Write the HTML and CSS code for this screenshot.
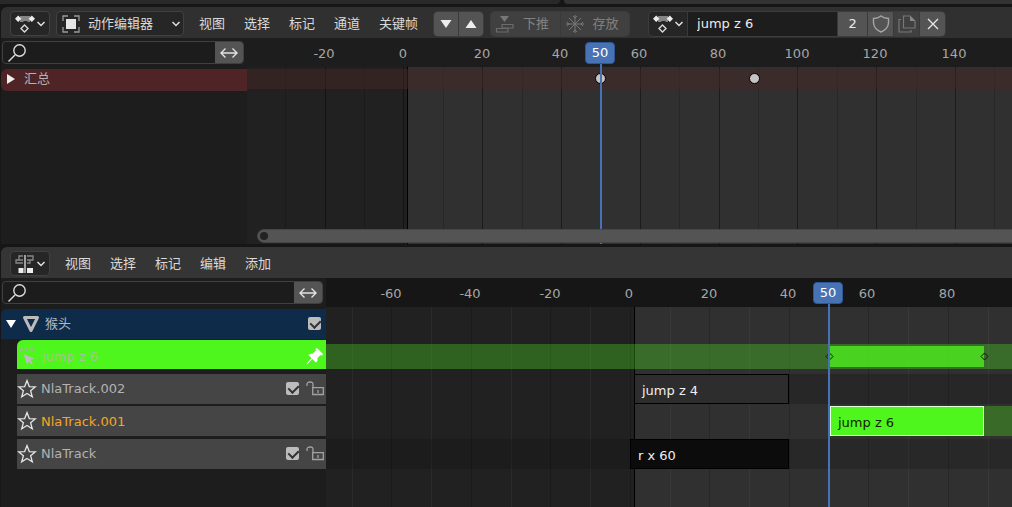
FILE: index.html
```html
<!DOCTYPE html>
<html lang="zh-CN">
<head>
<meta charset="utf-8">
<title>动作编辑器</title>
<link rel="stylesheet" href="styles.css">
</head>
<body>
<svg class="defs" aria-hidden="true">
  <symbol id="chevron" viewBox="0 0 10 8"><path d="M1.5 2 5 5.5 8.5 2" fill="none" stroke="#e0e0e0" stroke-width="1.5"/></symbol>
  <symbol id="action" viewBox="0 0 20 20">
    <path d="M5 2h10v6h-2l-1-1H9L8 8H5z" fill="#858585"/>
    <path d="M3.200 1.600 6.400 4.800 3.200 8 0 4.800zM16.800 1.600 20 4.800 16.800 8 13.600 4.800z" fill="#ececec"/>
    <path d="M9.500 11 13 14.500 9.500 18 6 14.500z" fill="none" stroke="#d8d8d8" stroke-width="1.400"/>
  </symbol>
  <symbol id="search" viewBox="0 0 20 20"><path d="M8 12 1.500 18.500" stroke="#ddd" stroke-width="1.500"/><circle cx="12.500" cy="7.500" r="5.700" fill="none" stroke="#ddd" stroke-width="1.400"/></symbol>
  <symbol id="expand" viewBox="0 0 18 12"><path d="M1 6H17M5.500 1.500 1 6l4.500 4.500M12.500 1.500 17 6l-4.500 4.500" fill="none" stroke="#e2e2e2" stroke-width="1.400"/></symbol>
  <symbol id="star" viewBox="0 0 20 20"><path d="M10 1.600 12.300 7.600 18.400 7.800 13.600 11.700 15.300 17.900 10 14.500 4.700 17.900 6.400 11.700 1.600 7.800 7.700 7.600z" fill="none" stroke="#e4e4e4" stroke-width="1.300"/></symbol>
  <symbol id="unlock" viewBox="0 0 18 16"><path d="M1 5V3.500Q1 1 4 1T7 3.500V7M6.700 6.700H17.300V13.500H6.700zM12 9v3" fill="none" stroke="#a2a2a2" stroke-width="1.300"/></symbol>
</svg>

<div class="edge"><div class="edge-a"></div><div class="edge-b"></div></div>

<section class="editor editor-action">
  <header class="header">
    <button class="box type" aria-label="编辑器类型"><svg width="20" height="20"><use href="#action"/></svg><svg width="10" height="8"><use href="#chevron"/></svg></button>
    <div class="mode">
      <svg class="mode-icon" width="18" height="18" viewBox="0 0 18 18"><path d="M1 6V1H6M12 1H17V6M17 12V17H12M6 17H1V12" fill="none" stroke="#999" stroke-width="1.300"/><path d="M4 4H14V14H4z" fill="#e6e6e6"/></svg>
      <select class="box" aria-label="模式"><option>动作编辑器</option></select>
      <svg class="mode-arrow" width="10" height="8"><use href="#chevron"/></svg>
    </div>
    <nav class="menus">
      <button>视图</button><button>选择</button><button>标记</button><button>通道</button><button>关键帧</button>
    </nav>
    <div class="group moves">
      <button aria-label="下移"><svg width="12" height="10"><path d="M.5 1H11.500L6 9z" fill="#eee"/></svg></button>
      <button aria-label="上移"><svg width="12" height="10"><path d="M.5 9H11.500L6 1z" fill="#eee"/></svg></button>
    </div>
    <div class="group stash">
      <button disabled><svg width="20" height="20" viewBox="0 0 20 20"><path d="M5 2H14L9.500 8z" fill="#777"/><path d="M7 10.500H18V14H7zM1.500 14.500H13V18H1.500z" fill="none" stroke="#6b6b6b" stroke-width="1.200"/></svg>下推</button>
      <button disabled><svg width="20" height="20" viewBox="0 0 20 20"><path d="M10 1V19M1 10H19M4 4 16 16M16 4 4 16M8 2 10 4 12 2M8 18 10 16 12 18M2 8 4 10 2 12M18 8 16 10 18 12" fill="none" stroke="#777" stroke-width="1"/></svg>存放</button>
    </div>
    <div class="group action-id">
      <button class="type dark" aria-label="浏览动作"><svg width="20" height="20"><use href="#action"/></svg><svg width="10" height="8"><use href="#chevron"/></svg></button>
      <input type="text" value="jump z 6" aria-label="动作名称">
      <button class="users">2</button>
      <button aria-label="伪用户"><svg width="18" height="18" viewBox="0 0 18 18"><path d="M9 1Q12 3.500 16.500 3.500V8Q16 14 9 17 2 14 1.500 8V3.500Q6 3.500 9 1z" fill="none" stroke="#a5a5a5" stroke-width="1.400"/></svg></button>
      <button disabled aria-label="复制"><svg width="20" height="20" viewBox="0 0 20 20"><path d="M6.500 2H13L18 7V14H6.500zM4 5.500H2V18H14V16" fill="none" stroke="#777" stroke-width="1.200"/><path d="M13 2V7H18z" fill="#888"/></svg></button>
      <button aria-label="取消关联"><svg width="12" height="12"><path d="M1 1 11 11M11 1 1 11" stroke="#e4e4e4" stroke-width="1.400"/></svg></button>
    </div>
  </header>
  <div class="content">
    <aside class="channels">
      <div class="search"><svg width="20" height="20"><use href="#search"/></svg><input type="search" aria-label="搜索"><button aria-label="反转"><svg width="18" height="12"><use href="#expand"/></svg></button></div>
      <div class="summary"><svg width="10" height="10"><path d="M1 0 9 5 1 10z" fill="#f0f0f0"/></svg>汇总</div>
    </aside>
    <div class="timeline">
      <div class="ruler">
        <span style="left:77px">-20</span><span style="left:156px">0</span><span style="left:235px">20</span><span style="left:313px">40</span><span style="left:392px">60</span><span style="left:471px">80</span><span style="left:550px">100</span><span style="left:628px">120</span><span style="left:707px">140</span>
      </div>
      <div class="canvas">
        <svg class="grid" aria-hidden="true">
          <rect class="range" x="160" width="100%" height="100%"/>
          <g class="minor"><rect x="38"/><rect x="117"/><rect x="196"/><rect x="275"/><rect x="432"/><rect x="511"/><rect x="590"/><rect x="669"/><rect x="747"/></g>
          <g class="major"><rect x="78"/><rect x="156"/><rect x="235"/><rect x="314"/><rect x="393"/><rect x="472"/><rect x="550"/><rect x="629"/><rect x="708"/></g>
          <g class="start"><rect x="160"/></g>
        </svg>
        <div class="summary-lane"><i class="key" style="left:353px"></i><i class="key" style="left:507px"></i></div>
      </div>
      <div class="playhead" style="left:353px"><b>50</b></div>
      <div class="scrollbar"></div>
    </div>
  </div>
</section>

<section class="editor editor-nla">
  <header class="header">
    <button class="box type" aria-label="编辑器类型"><svg width="20" height="20" viewBox="0 0 20 20"><path d="M8 2H4V6H1V9H8M12 2H18V6H15V9H12M4 6H8M12 6H15" fill="none" stroke="#888" stroke-width="1.300"/><path d="M3.500 14H8.500V19H3.500zM12 14H18V19H12z" fill="#eee"/><path d="M10 1V19" stroke="#eee" stroke-width="1.200"/></svg><svg width="10" height="8"><use href="#chevron"/></svg></button>
    <nav class="menus"><button>视图</button><button>选择</button><button>标记</button><button>编辑</button><button>添加</button></nav>
  </header>
  <div class="content">
    <aside class="channels channels-wide">
      <div class="search"><svg width="20" height="20"><use href="#search"/></svg><input type="search" aria-label="搜索"><button aria-label="反转"><svg width="18" height="12"><use href="#expand"/></svg></button></div>
      <div class="object">
        <svg width="10" height="8"><path d="M0 0H10L5 8z" fill="#fff"/></svg>
        <svg width="18" height="18" viewBox="0 0 18 18"><path d="M2.500 2.500H15.500L9 15.500z" fill="none" stroke="#bbb" stroke-width="3" stroke-linejoin="round"/></svg>
        <label for="object-on">猴头</label><input type="checkbox" id="object-on" checked>
      </div>
      <div class="active-action">
        <svg width="18" height="20" viewBox="0 0 18 20"><path d="M3 1 5.500 3.500 3 6 .5 3.500zM14 1 16.500 3.500 14 6 11.500 3.500zM6 1H11L9.500 3.500 11 6H6L7.500 3.500z" fill="#8fc47c"/><path d="M5.500 8 16.500 12.500 12.500 14 15 17.500 13.500 18.500 11 15.500 9 18.500z" fill="#bcbcbc"/></svg>
        <span>jump z 6</span>
        <button aria-label="固定"><svg width="18" height="18" viewBox="0 0 18 18"><path d="M11 1 17 7 16 8.500 14.500 8 11.500 11Q12 14 10 15.500L6.500 12 1 17.500.5 17 5.500 11 2.500 8Q4 6 7 6.500L10 3.500 9.500 2z" fill="#fff"/></svg></button>
      </div>
      <div class="track"><svg width="20" height="20"><use href="#star"/></svg><label for="t2">NlaTrack.002</label><input type="checkbox" id="t2" checked><button aria-label="锁定"><svg width="18" height="16"><use href="#unlock"/></svg></button></div>
      <div class="track selected"><svg width="20" height="20"><use href="#star"/></svg><span>NlaTrack.001</span></div>
      <div class="track last"><svg width="20" height="20"><use href="#star"/></svg><label for="t0">NlaTrack</label><input type="checkbox" id="t0" checked><button aria-label="锁定"><svg width="18" height="16"><use href="#unlock"/></svg></button></div>
    </aside>
    <div class="timeline">
      <div class="ruler">
        <span style="left:65px">-60</span><span style="left:144px">-40</span><span style="left:224px">-20</span><span style="left:303px">0</span><span style="left:383px">20</span><span style="left:462px">40</span><span style="left:541px">60</span><span style="left:621px">80</span>
      </div>
      <div class="canvas">
        <svg class="grid" aria-hidden="true">
          <rect class="range" x="308" width="100%" height="100%"/>
          <g class="minor"><rect x="26"/><rect x="105"/><rect x="185"/><rect x="264"/><rect x="344"/><rect x="423"/><rect x="582"/><rect x="662"/></g>
          <g class="major"><rect x="65"/><rect x="145"/><rect x="224"/><rect x="304"/><rect x="383"/><rect x="463"/><rect x="542"/><rect x="622"/></g>
          <g class="start"><rect x="308"/></g>
        </svg>
        <div class="lane lane-action">
          <div class="extent" style="left:504px;width:154px"></div>
          <svg class="mark" style="left:503px" width="9" height="9"><path d="M4.500 1 8 4.500 4.500 8 1 4.500z"/></svg>
          <svg class="mark" style="left:658px" width="9" height="9"><path d="M4.500 1 8 4.500 4.500 8 1 4.500z"/></svg>
        </div>
        <div class="lane"><div class="hold" style="left:463px"></div><div class="strip" style="left:308px;width:155px">jump z 4</div></div>
        <div class="lane lane-selected"><div class="hold" style="left:658px"></div><div class="strip" style="left:504px;width:154px">jump z 6</div></div>
        <div class="lane lane-last"><div class="strip" style="left:304px;width:159px">r x 60</div></div>
      </div>
      <div class="playhead" style="left:502px"><b>50</b></div>
    </div>
  </div>
</section>
</body>
</html>
```

FILE: styles.css
```css
* { box-sizing: border-box; }
body {
  margin: 0;
  min-height: 100vh;
  display: flex;
  flex-direction: column;
  background: #161616;
  color: #dadada;
  font: 13px/18px "DejaVu Sans", "Noto Sans CJK SC", sans-serif;
  overflow: hidden;
}
svg { display: block; flex: none; }
.defs { position: absolute; width: 0; height: 0; }
button, input, select { font: inherit; color: inherit; margin: 0; padding: 0; border: 0; background: none; }

.edge { display: flex; gap: 4px; height: 4px; margin-bottom: 3px; }
.edge-a { flex: 560; background: #292929; border-bottom-right-radius: 4px; }
.edge-b { flex: 448; background: #333; border-bottom-left-radius: 4px; }

.editor { display: flex; flex-direction: column; margin-left: 1px; }
.editor-action { flex: 237 1 0; margin-bottom: 3px; }
.editor-nla { flex: 260 1 0; }
.header {
  display: flex;
  align-items: center;
  flex: none;
  height: 31px;
  padding: 2px 0 0 9px;
  background: #303030;
  border-top-left-radius: 6px;
}
.editor-nla .header { background: #353535; }
.box { height: 25px; border: 1px solid #414141; border-radius: 4px; background: #262626; }
.type { display: flex; align-items: center; justify-content: space-between; width: 40px; padding: 0 3px 0 4px; }
.mode { position: relative; margin-left: 6px; }
.mode select { width: 128px; padding-left: 31px; appearance: none; }
.mode-icon { position: absolute; left: 6px; top: 4px; }
.mode-arrow { position: absolute; right: 3px; top: 9px; }
.menus { display: flex; gap: 19px; margin-left: 15px; white-space: nowrap; text-shadow: 0 1px 1px #0008; }

.group { display: flex; gap: 1px; height: 24px; border-radius: 4px; overflow: hidden; background: #3a3a3a; box-shadow: 0 0 0 1px #3c3c3c; }
.group button { display: flex; align-items: center; justify-content: center; width: 25px; background: #545454; }
.group button:disabled { background: #404040; color: #808080; }
.moves { margin-left: 16px; width: 49px; }
.moves button { flex: 1; }
.stash { margin-left: 8px; width: 138px; }
.group.stash button { flex: 1; gap: 8px; justify-content: flex-start; padding-left: 4px; }
.action-id { margin-left: 20px; color: #ececec; }
.action-id .type { width: 38px; background: #262626; justify-content: space-between; }
.action-id input { width: 149px; padding-left: 9px; background: #1d1d1d; }
.action-id .users { width: 29px; }

.content { display: flex; flex: 1; min-height: 0; }
.channels { flex: none; width: 246px; background: #1d1d1d; }
.channels-wide { width: 325px; }
.search { display: flex; align-items: center; height: 23px; margin: 3px 3px 5px 1px; border: 1px solid #404040; border-radius: 4px; overflow: hidden; background: #1c1c1c; }
.search > svg { margin-left: 4px; }
.search input { flex: 1; min-width: 0; }
.search button { display: flex; align-items: center; justify-content: center; align-self: stretch; width: 28px; background: #545454; }
.summary { display: flex; align-items: center; gap: 8px; height: 22px; padding: 0 0 2px 5px; background: #4e2427; color: #b8b0b0; border-radius: 6px 0 0 6px; }

.object { display: flex; align-items: center; height: 30px; padding: 0 5px; background: #0f2b4a; color: #b0b8c0; border-radius: 6px 0 0 0; }
.object svg + svg { margin: 0 5px 0 6px; }
.object label { flex: 1; }
.channels input[type=checkbox] {
  appearance: none;
  width: 13px;
  height: 13px;
  margin-bottom: 2px;
  border-radius: 2px;
  background: #bcbcbc;
  position: relative;
}
.channels input[type=checkbox]::after {
  content: "";
  position: absolute;
  left: 4px;
  top: 1px;
  width: 5px;
  height: 8px;
  border: solid #333;
  border-width: 0 2px 2px 0;
  transform: rotate(45deg);
}
.active-action { display: flex; align-items: center; gap: 6px; height: 29px; margin: 1px 0 5px 16px; padding: 3px 2px 0 1px; background: #4ff61d; color: #a2c496; border-radius: 6px 0 0 0; }
.active-action span { flex: 1; padding-top: 2px; }
.track { display: flex; align-items: center; height: 30px; margin: 0 0 2px 16px; padding: 0 2px 0 0; background: #454545; color: #b2b2b2; }
.track svg { margin-right: 4px; }
.track label { flex: 1; }
.track span { padding-top: 2px; }
.track button { margin-left: 7px; }
.track button svg { margin: 0; }
.track.selected { color: #f5a623; margin-bottom: 3px; }

.timeline { position: relative; display: flex; flex-direction: column; flex: 1; min-width: 0; overflow: hidden; background: #212121; }
.ruler { position: relative; flex: none; height: 29px; background: #1d1d1d; color: #a6a6a6; }
.editor-nla .ruler { background: #161616; }
.ruler span { position: absolute; top: 7px; transform: translateX(-50%); }
.canvas { position: relative; flex: 1; }
.grid { position: absolute; inset: 0; width: 100%; height: 100%; }
.grid g rect { width: 1px; height: 100%; }
.range { fill: #303030; }
.minor { fill: #000; opacity: .15; }
.major { fill: #000; opacity: .42; }
.start { fill: #000; }
.editor-nla .minor { fill: #fff; opacity: .04; }
.editor-nla .major { opacity: .15; }
.summary-lane { position: relative; height: 20px; margin-top: 2px; background: rgba(70, 38, 38, .5); }
.key { position: absolute; top: 4px; width: 11px; height: 11px; margin-left: -5px; border: 1px solid #000; border-radius: 50%; background: #c4c4c4; }
.playhead { position: absolute; top: 4px; bottom: 0; width: 2px; background: #4772b3; }
.playhead b { position: absolute; top: 0; left: -15px; width: 30px; height: 22px; border: 1px solid #2d5797; border-radius: 4px; background: #4772b3; color: #fff; font-weight: 400; line-height: 20px; text-align: center; }
.scrollbar { position: absolute; left: 10px; right: -8px; bottom: 1px; height: 14px; border: 1px solid #464646; border-radius: 7px; background: #545454; }
.scrollbar::before { content: ""; position: absolute; left: 2px; top: 2px; width: 8px; height: 8px; border-radius: 50%; background: #222; }

.lane { position: relative; height: 30px; margin-bottom: 2px; }
.lane-action { height: 25px; margin: 37px 0 5px; background: rgba(79, 246, 29, .3); }
.lane-last { margin: 3px 0 0; background: rgba(10, 10, 10, .2); }
.extent { position: absolute; top: 2px; bottom: 2px; background: rgba(79, 246, 29, .75); }
.mark { position: absolute; top: 8px; margin-left: -4px; fill: none; stroke: #101510; }
.hold { position: absolute; top: 0; bottom: 0; right: 0; background: rgba(10, 10, 10, .25); }
.lane-selected .hold { background: #396a28; }
.strip { position: absolute; top: 0; height: 30px; padding: 0 7px; border: 1px solid #000; background: #2d2d2d; color: #f0f0f0; line-height: 31px; }
.lane-selected .strip { border-color: #e4ffdc; background: #4ff61d; color: #102008; }
.lane-last .strip { background: #0c0c0c; }
```
